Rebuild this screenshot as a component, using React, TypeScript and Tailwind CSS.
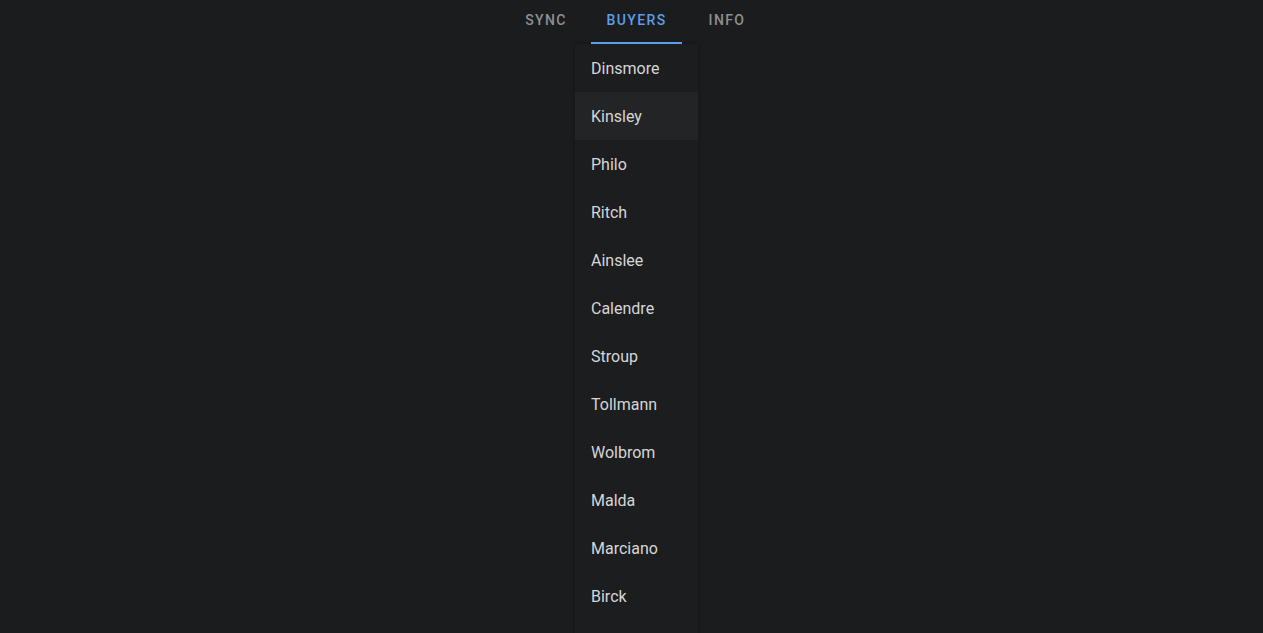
import React from "react";

const names = [
  "Dinsmore",
  "Kinsley",
  "Philo",
  "Ritch",
  "Ainslee",
  "Calendre",
  "Stroup",
  "Tollmann",
  "Wolbrom",
  "Malda",
  "Marciano",
  "Birck",
];

export default function App() {
  return (
    <div
      className="h-[633px] w-full overflow-hidden bg-[#1b1c1e]"
      style={{ fontFamily: "Roboto, 'Liberation Sans', sans-serif" }}
    >
      <div className="flex justify-center pl-[10px]">
        <div className="relative flex h-[44px]">
          <div className="flex w-[90px] items-center justify-center pb-[3px] text-[14px] font-medium uppercase tracking-[0.1em] text-[#8e8f91]">
            Sync
          </div>
          <div className="relative flex w-[91px] items-center justify-center pb-[3px] text-[14px] font-medium uppercase tracking-[0.1em] text-[#5b9ee9]">
            Buyers
            <span className="absolute bottom-0 left-0 h-[2px] w-full bg-[#5b9ee9]" />
          </div>
          <div className="flex w-[90px] items-center justify-center pb-[3px] text-[14px] font-medium uppercase tracking-[0.1em] text-[#8e8f91]">
            Info
          </div>
        </div>
      </div>
      <div className="flex justify-center pl-[10px]">
        <div className="w-[123px] bg-[#1c1d1f] pb-[60px] shadow-[0_0_4px_rgba(0,0,0,0.35)]">
          {names.map((n) => (
            <div
              key={n}
              className={`flex h-[48px] items-center px-4 pt-[2px] text-[16px] text-[#d6d6d7] ${
                n === "Kinsley" ? "bg-[#232426]" : ""
              }`}
            >
              {n}
            </div>
          ))}
        </div>
      </div>
    </div>
  );
}
